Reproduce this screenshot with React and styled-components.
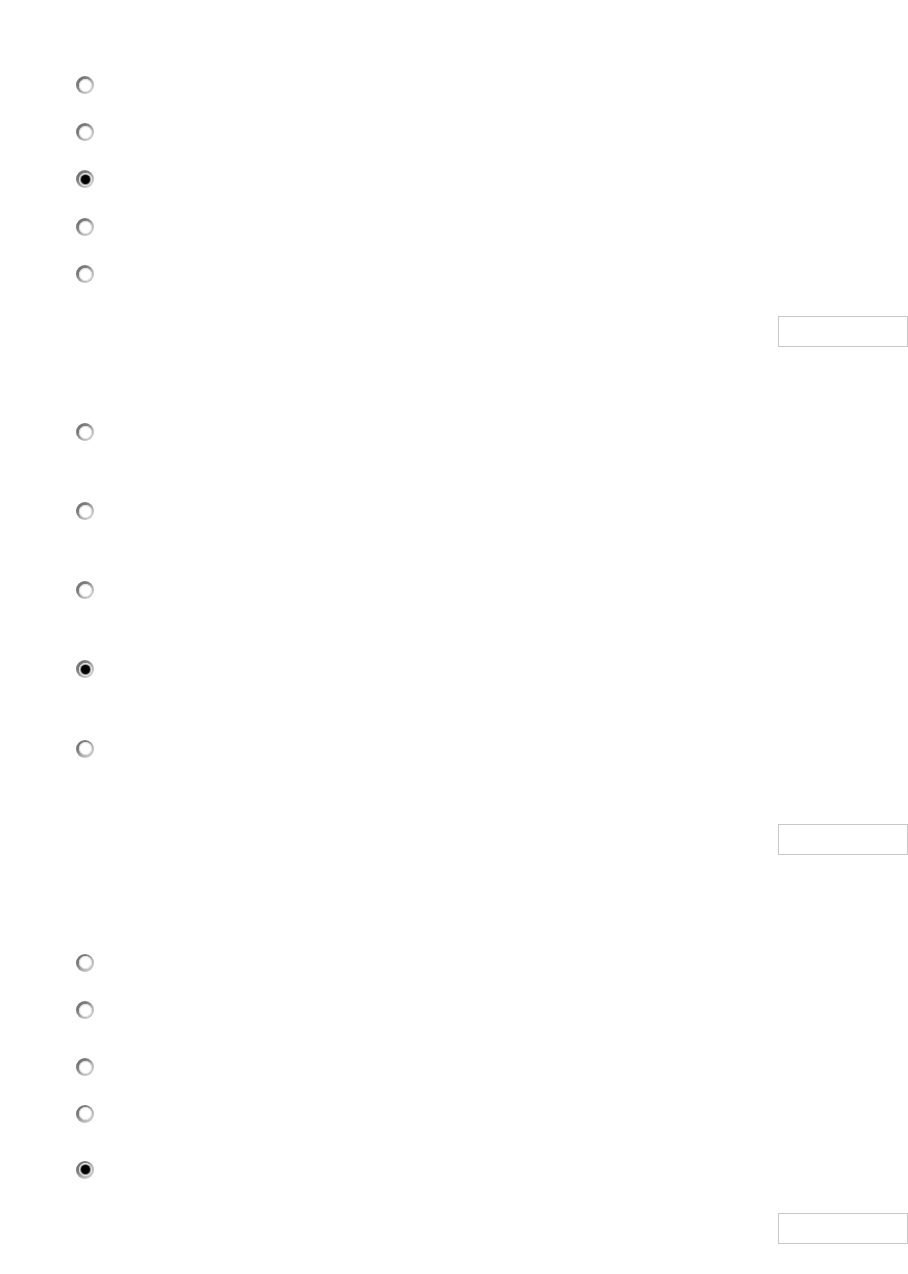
import React from "react";
import styled, { createGlobalStyle } from "styled-components";

const Global = createGlobalStyle`
  html, body { margin: 0; padding: 0; background: #fff; }
  body { font-family: "Liberation Sans", Arial, sans-serif; }
`;

const Page = styled.main`
  width: 908px;
  display: flex;
  flex-direction: column;
`;

const Section = styled.section`
  display: flex;
  flex-direction: column;
  padding-top: ${(p) => p.$top}px;
`;

const OptionList = styled.div`
  display: flex;
  flex-direction: column;
  padding-left: 76px;
`;

const Option = styled.label`
  display: flex;
  align-items: center;
  height: 18px;
  margin-top: ${(p) => p.$gap || 0}px;
`;

const Radio = styled.input.attrs({ type: "radio" })`
  appearance: none;
  -webkit-appearance: none;
  margin: 0;
  width: 18px;
  height: 18px;
  border-radius: 50%;
  background: linear-gradient(135deg, #6a6a6a 0%, #808080 35%, #bdbdbd 70%, #d4d4d4 100%);
  position: relative;
  cursor: pointer;

  &::before {
    content: "";
    position: absolute;
    inset: 2.5px;
    border-radius: 50%;
    background: #fff;
    box-shadow: inset 0 0 0 1px #dedede;
  }

  &:checked::after {
    content: "";
    position: absolute;
    left: 4.5px;
    top: 4.5px;
    width: 9px;
    height: 9px;
    border-radius: 50%;
    background: #000;
    box-shadow: 0 0 0 1px #8e8e8e;
  }
`;

const Footer = styled.div`
  display: flex;
  justify-content: flex-end;
  margin-top: ${(p) => p.$gap}px;
`;

const NextBox = styled.button`
  box-sizing: border-box;
  width: 130px;
  height: 31px;
  background: #fff;
  border: 1px solid #c8c8c8;
  border-radius: 0;
  padding: 0;
`;

const groups = [
  { top: 76, gaps: [0, 29, 29, 30, 29], checked: 2, footerGap: 33 },
  { top: 76, gaps: [0, 61, 61, 61, 61.5], checked: 3, footerGap: 66.5 },
  { top: 98.5, gaps: [0, 29.5, 39, 28.5, 38], checked: 4, footerGap: 34.5 },
];

export default function App() {
  return (
    <>
      <Global />
      <Page>
        {groups.map((g, gi) => (
          <Section key={gi} $top={g.top}>
            <OptionList>
              {g.gaps.map((gap, i) => (
                <Option key={i} $gap={gap}>
                  <Radio name={`q${gi}`} defaultChecked={i === g.checked} />
                </Option>
              ))}
            </OptionList>
            <Footer $gap={g.footerGap}>
              <NextBox type="button" aria-label="next" />
            </Footer>
          </Section>
        ))}
      </Page>
    </>
  );
}
